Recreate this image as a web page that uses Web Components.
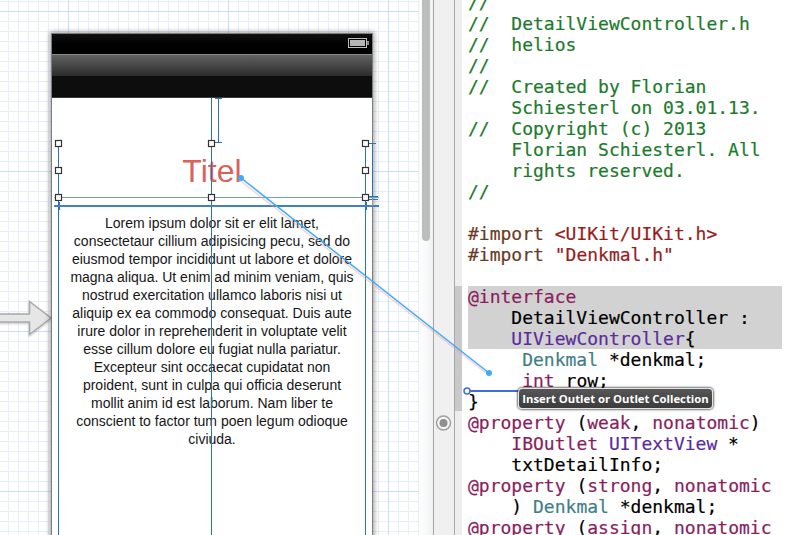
<!DOCTYPE html>
<html><head><meta charset="utf-8"><title>Storyboard outlet</title>
<style>html,body{margin:0;height:100%;overflow:hidden;background:#fff}</style></head>
<body>
<ib-app>
  <ib-canvas slot="canvas">
    <ib-phone>
      <h1 slot="title">Titel</h1>
      <p slot="body">Lorem ipsum dolor sit er elit lamet,<br>consectetaur cillium adipisicing pecu, sed do<br>eiusmod tempor incididunt ut labore et dolore<br>magna aliqua. Ut enim ad minim veniam, quis<br>nostrud exercitation ullamco laboris nisi ut<br>aliquip ex ea commodo consequat. Duis aute<br>irure dolor in reprehenderit in voluptate velit<br>esse cillum dolore eu fugiat nulla pariatur.<br>Excepteur sint occaecat cupidatat non<br>proident, sunt in culpa qui officia deserunt<br>mollit anim id est laborum. Nam liber te<br>conscient to factor tum poen legum odioque<br>civiuda.</p>
    </ib-phone>
  </ib-canvas>
  <ib-scroller slot="scroller"></ib-scroller>
  <ib-gutter slot="gutter"></ib-gutter>
  <ib-code slot="code"></ib-code>
  <ib-wire slot="wire"></ib-wire>
</ib-app>
<script>
function def(name, css, html, init){
  customElements.define(name, class extends HTMLElement{
    constructor(){super();const r=this.attachShadow({mode:'open'});r.innerHTML='<style>'+css+'</style>'+html;if(init)init(r);}
  });
}
def('ib-app',`:host{display:flex;position:relative;width:788px;height:535px;overflow:hidden;font-family:"Liberation Sans",sans-serif}`,
 `<slot name="canvas"></slot><slot name="scroller"></slot><slot name="gutter"></slot><slot name="code"></slot><slot name="wire"></slot>`);
def('ib-canvas',`:host{display:block;position:relative;flex:0 0 419px;height:535px;overflow:hidden;background-color:#fff;
 background-image:
  linear-gradient(#c9dff8 1px,transparent 1px),linear-gradient(90deg,#c9dff8 1px,transparent 1px),
  linear-gradient(#e4effb 1px,transparent 1px),linear-gradient(90deg,#e4effb 1px,transparent 1px);
 background-size:100% 160px,160px 100%,100% 10px,10px 100%;
 background-position:0 11px,68px 0,0 1px,8px 0}`,
 `<svg width="56" height="44" viewBox="0 0 56 44" style="position:absolute;left:0;top:296px"><defs><filter id="s" x="-10%" y="-10%" width="120%" height="130%"><feDropShadow dx="0" dy="1" stdDeviation="1" flood-color="#000" flood-opacity=".25"/></filter></defs><path d="M-2 18H29.500V5.500L51 22 29.500 38.500V26H-2Z" fill="#e6e6e6" stroke="#a9a9a9" stroke-width="1.500" filter="url(#s)"/></svg><slot></slot>`);
def('ib-phone',`:host{display:flex;flex-direction:column;position:absolute;left:51px;top:33px;width:320px;height:520px;border:1px solid #7d7d7d;box-shadow:0 0 5px 1px rgba(0,0,0,.4);background:#fff}
 .status{flex:0 0 20px;box-sizing:border-box;background:linear-gradient(#111,#000 50%);display:flex;justify-content:flex-end;align-items:flex-start;padding:4px 3px 0 0}
 .nav{flex:0 0 44px;box-sizing:border-box;border-top:1px solid #8a8a8a;border-bottom:1px solid #3c3c3c;background:linear-gradient(#626262,#2b2b2b 50%,#0e0e0e 50%,#0c0c0c)}
 .title{flex:0 0 99px;display:flex;align-items:flex-end;justify-content:center;box-sizing:border-box;height:99px;padding-bottom:7px}
 .body{flex:1}
 ::slotted(h1){margin:0;font:400 32px/38px "Liberation Sans",sans-serif;color:#d9625a}
 ::slotted(p){margin:0;font:400 14px/18px "Liberation Sans",sans-serif;color:#161616;text-align:center;padding-top:17px}
 svg.g{position:absolute;left:-1px;top:-1px;overflow:visible;pointer-events:none}`,
 `<div class="status"><svg width="21" height="11" viewBox="0 0 21 11"><rect x=".5" y=".5" width="18" height="9" fill="none" stroke="#bdbdbd"/><rect x="2" y="2" width="15" height="6" fill="#b4b4b4"/><rect x="19" y="3" width="2" height="4" fill="#8a8a8a"/></svg></div>
 <div class="nav"></div>
 <div class="title"><slot name="title"></slot></div>
 <div class="body"><slot name="body"></slot></div>
 <svg class="g" width="322" height="502" viewBox="51 33 322 502">
  <g fill="#2a73b9" shape-rendering="crispEdges">
   <rect x="58" y="143" width="1" height="392"/><rect x="365" y="143" width="1" height="392"/><rect x="211" y="98" width="1" height="437"/>
   <rect x="218" y="98" width="1" height="45"/><rect x="215" y="98" width="7" height="1"/><rect x="212" y="142" width="10" height="1"/>
   <rect x="372" y="143" width="1" height="54"/><rect x="366" y="143" width="10" height="1"/>
   <rect x="368" y="196" width="10" height="1"/><rect x="368" y="199" width="10" height="1"/>
   <rect x="58" y="202" width="2" height="8"/><rect x="365" y="202" width="2" height="8"/>
  </g>
  <g shape-rendering="crispEdges">
  <rect x="54" y="197" width="325" height="1" fill="#6d9fd6"/>
  <rect x="54" y="205" width="325" height="2" fill="#3f80c6"/>
  <rect x="372" y="199" width="1" height="7" fill="#9a9a9a"/>
  </g>
  <g fill="#fff" stroke="#333" stroke-width="1.200">
   ${[58,211,365].flatMap(x=>[143,170,197].map(y=>(x===211&&y===170)?'':`<rect x="${x-2.5}" y="${y-2.5}" width="6" height="6"/>`)).join('')}
  </g>
 </svg>`);
def('ib-scroller',`:host{display:block;flex:0 0 14px;height:535px;background:linear-gradient(90deg,#fdfdfd,#fafafa 50%,#f1f1f1);position:relative}
 .thumb{width:8px;height:241px;margin-left:3px;background:#bdbdbd;border-radius:0 0 4px 4px}`,`<div class="thumb"></div>`);
def('ib-gutter',`:host{display:block;flex:0 0 29px;height:535px;position:relative;box-sizing:border-box;border-left:1px solid #a6a6a6;background:#f0f0f0}
 .rule{position:absolute;left:20px;top:0;bottom:0;width:1px;background:#a8a8a8}
 .strip{position:absolute;left:21px;right:0;top:0;bottom:0;background:#eeeeee}
 .sel{position:absolute;left:21px;right:0;top:286px;height:125px;background:#c9c9c9}
 svg{position:absolute;left:0;top:412px}`,
 `<div class="strip"></div><div class="sel"></div><div class="rule"></div><svg width="18" height="22" viewBox="0 0 18 22"><circle cx="9.500" cy="11" r="7" fill="#f4f4f4" stroke="#a0a0a0" stroke-width="1.500"/><circle cx="9.500" cy="11" r="4" fill="#8f8f8f"/></svg>`);
const C={c:'#1c7a2c',p:'#6b3a24',s:'#981c1c',k:'#8b1d5e',t:'#3f7e87',u:'#5c2c9c'};
const L=[
 ['c','//'],['c','//  DetailViewController.h'],['c','//  helios'],['c','//'],['c','//  Created by Florian'],['c','    Schiesterl on 03.01.13.'],['c','//  Copyright (c) 2013'],['c','    Florian Schiesterl. All'],['c','    rights reserved.'],['c','//'],[],
 [['p','#import '],['s','&lt;UIKit/UIKit.h&gt;']],[['p','#import '],['s','"Denkmal.h"']],[],
 {h:1,r:[['k','@interface']]},{h:1,r:[[0,'    DetailViewController :']]},{h:1,r:[[0,'    '],['u','UIViewController'],[0,'{']]},
 [[0,'     '],['t','Denkmal'],[0,' *denkmal;']],[[0,'     '],['k','int'],[0,' row;']],[[0,'}']],
 [['k','@property'],[0,' ('],['k','weak'],[0,', '],['k','nonatomic'],[0,')']],
 [[0,'    '],['k','IBOutlet'],[0,' '],['u','UITextView'],[0,' *']],[[0,'    txtDetailInfo;']],
 [['k','@property'],[0,' ('],['k','strong'],[0,', '],['k','nonatomic']],
 [[0,'    ) '],['t','Denkmal'],[0,' *denkmal;']],
 [['k','@property'],[0,' ('],['k','assign'],[0,', '],['k','nonatomic']]
];
function run(a){return a.map(([c,t])=>c?`<span style="color:${C[c]}">${t}</span>`:t).join('');}
def('ib-code',`:host{display:block;flex:1;height:535px;overflow:hidden;background:#fff}
 .w{margin-top:-8px;padding:0 0 0 6px;font:400 18px/21px "DejaVu Sans Mono",monospace;color:#000;white-space:pre;-webkit-text-stroke:.2px}
 .l{height:21px}.h{background:#d2d2d2;width:314px}`,
 `<div class="w"></div>`,r=>{
  r.querySelector('.w').innerHTML=L.map(x=>{
   if(x.h) return `<div class="l h">${run(x.r)}</div>`;
   if(!x.length) return '<div class="l"></div>';
   if(typeof x[0]==='string') return `<div class="l">${run([x])}</div>`;
   return `<div class="l">${run(x)}</div>`;
  }).join('');
 });
def('ib-tip',`:host{position:absolute;left:518px;top:388px;box-sizing:border-box;width:195px;height:21px;border:1px solid #e4e4e4;border-radius:4px;background:linear-gradient(#565656,#3c3c3c);color:#fff;font:700 11.300px/19px "Open Sans",sans-serif;text-align:center;white-space:nowrap;box-shadow:0 0 2px 1px rgba(0,0,0,.55)}`,`<slot></slot>`);
def('ib-wire',`:host{display:block;position:absolute;inset:0;pointer-events:none}`,
 `<svg width="788" height="535" viewBox="0 0 788 535" style="position:absolute;left:0;top:0">
  <line x1="241" y1="179" x2="489" y2="373" stroke="#e8a0a0" stroke-opacity=".45" stroke-width="1.500" transform="translate(-1 1.500)"/>
  <line x1="241" y1="178" x2="489" y2="373" stroke="#3fabf8" stroke-width="1.500"/>
  <circle cx="241" cy="178" r="3" fill="#3fabf8"/><circle cx="489" cy="373" r="3" fill="#3fabf8"/>
  <line x1="470" y1="391" x2="520" y2="391" stroke="#3d6fdc" stroke-width="2"/>
  <circle cx="467" cy="391" r="3" fill="#fff" stroke="#3d6fdc" stroke-width="1.500"/>
 </svg><ib-tip>Insert Outlet or Outlet Collection</ib-tip>`);
</script>
</body></html>
